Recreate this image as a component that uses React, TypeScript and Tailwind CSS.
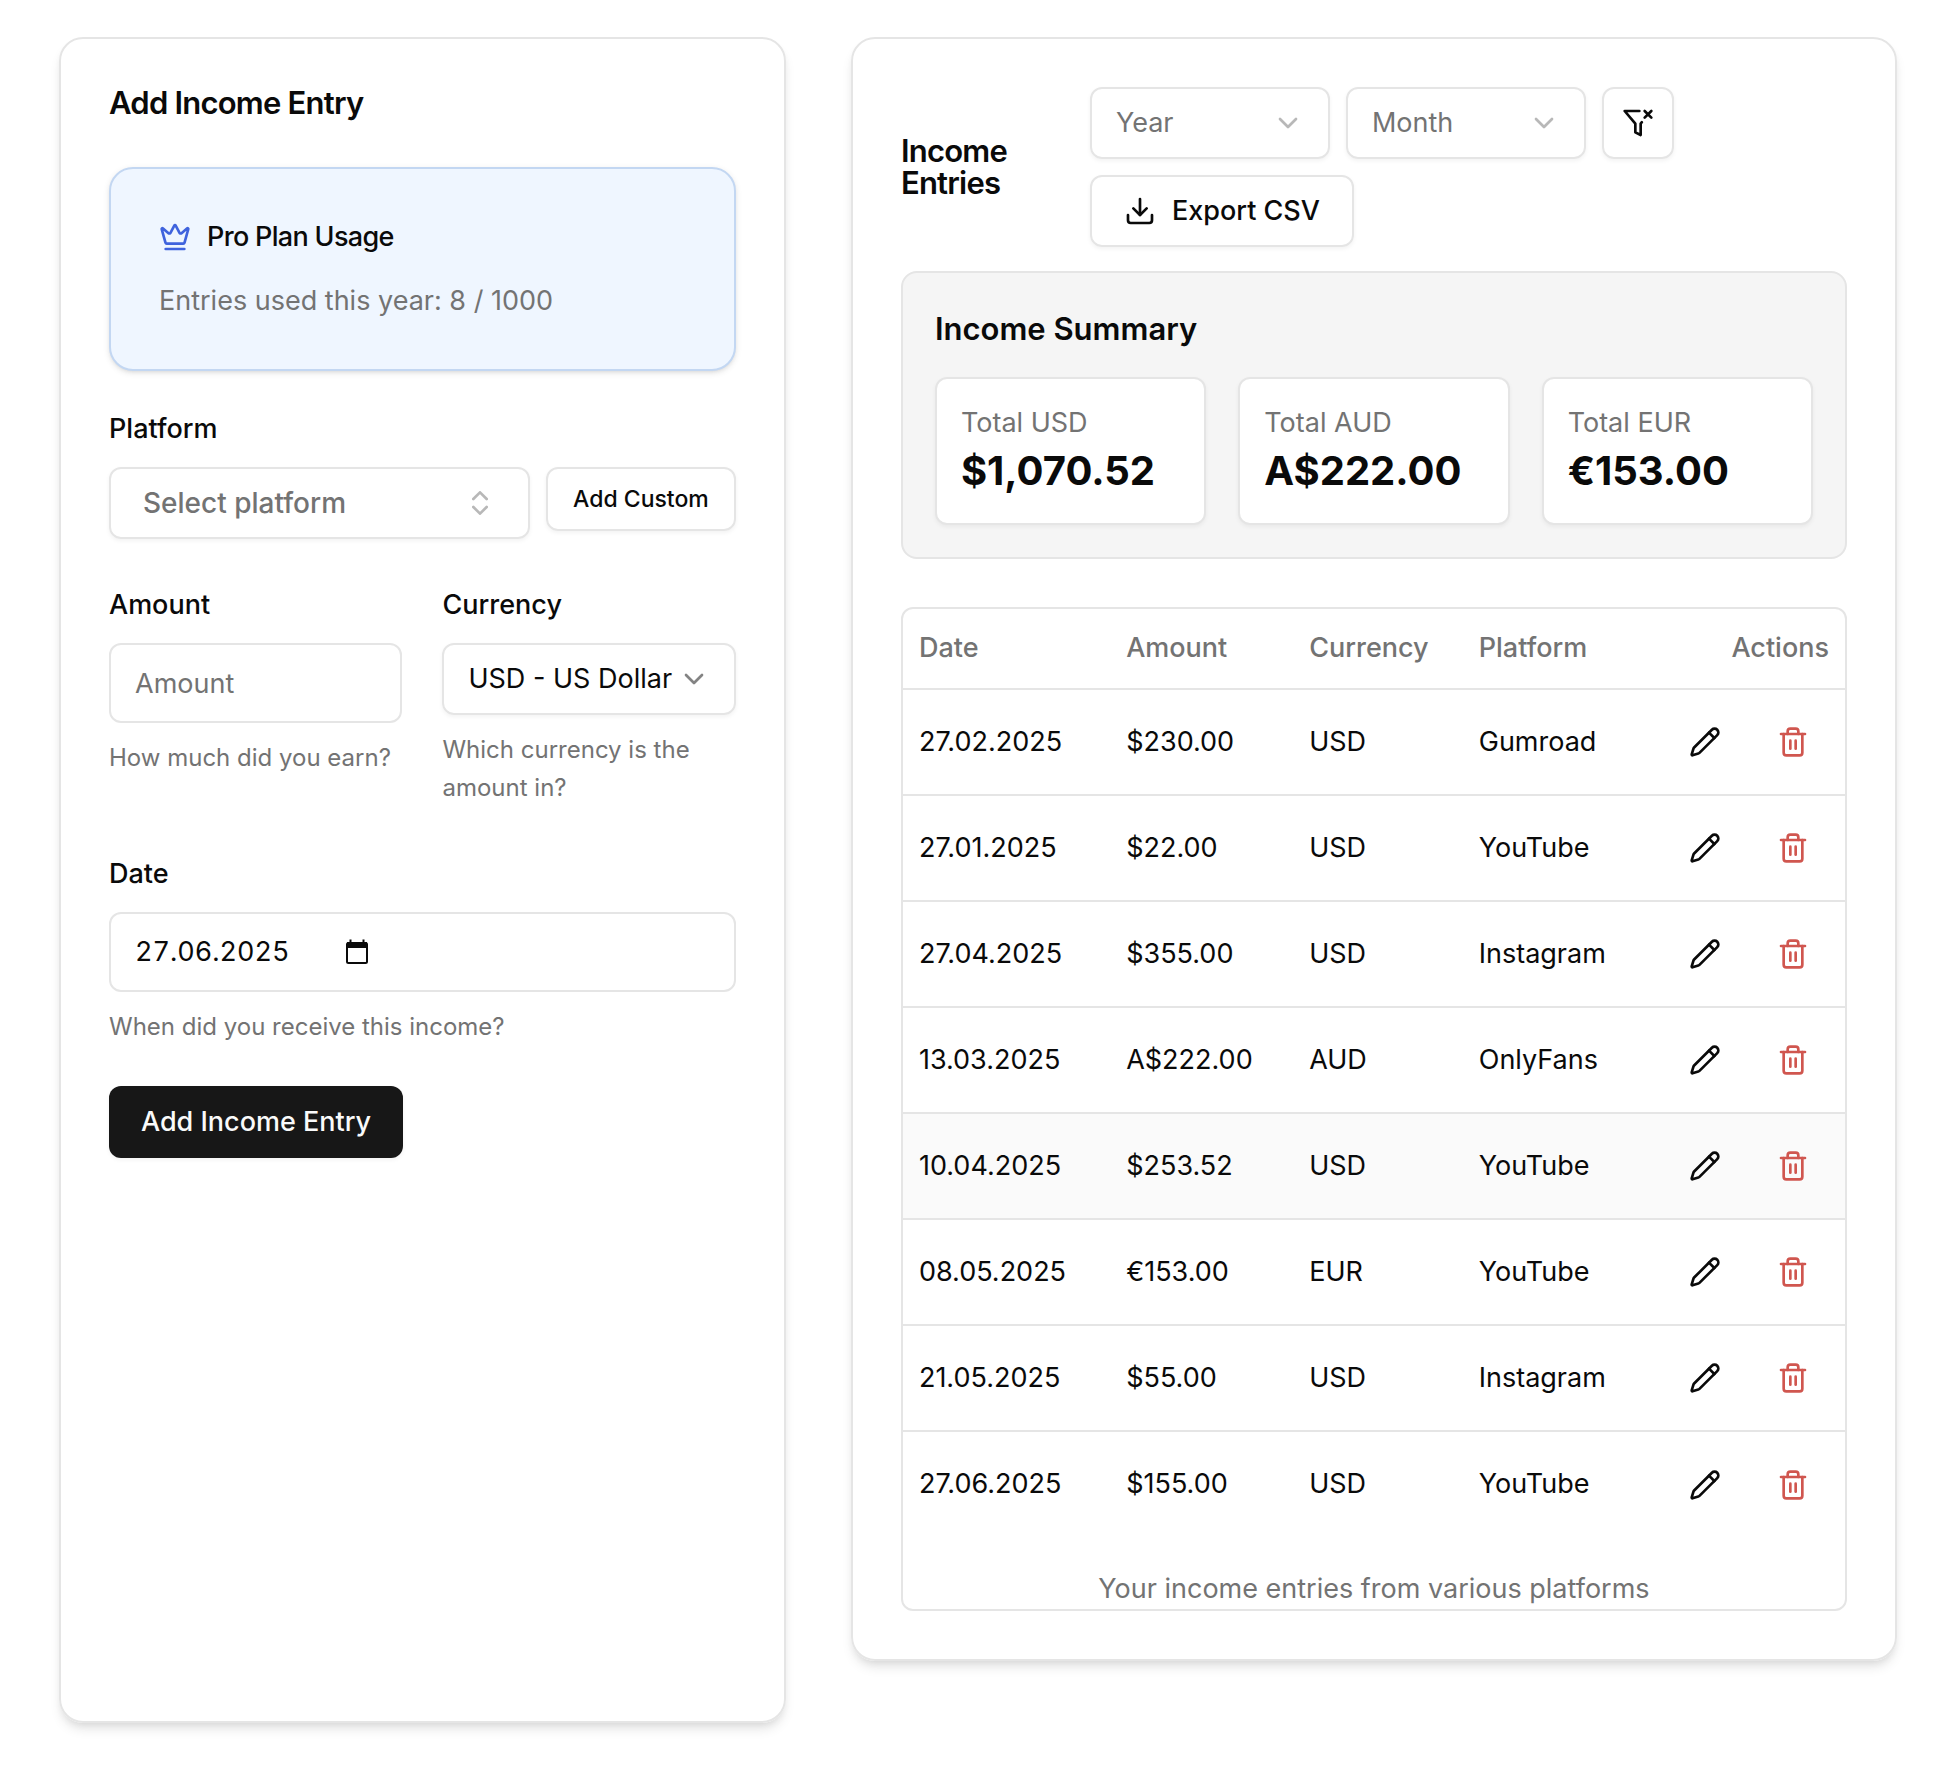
import type { ReactNode } from "react";
import { ChevronDown, ChevronsUpDown, Crown, Download, Pencil, Trash2 } from "lucide-react";

const totals = [
  { currency: "USD", total: "$1,070.52" },
  { currency: "AUD", total: "A$222.00" },
  { currency: "EUR", total: "€153.00" },
];

const entries = [
  { date: "27.02.2025", amount: "$230.00", currency: "USD", platform: "Gumroad" },
  { date: "27.01.2025", amount: "$22.00", currency: "USD", platform: "YouTube" },
  { date: "27.04.2025", amount: "$355.00", currency: "USD", platform: "Instagram" },
  { date: "13.03.2025", amount: "A$222.00", currency: "AUD", platform: "OnlyFans" },
  { date: "10.04.2025", amount: "$253.52", currency: "USD", platform: "YouTube", active: true },
  { date: "08.05.2025", amount: "€153.00", currency: "EUR", platform: "YouTube" },
  { date: "21.05.2025", amount: "$55.00", currency: "USD", platform: "Instagram" },
  { date: "27.06.2025", amount: "$155.00", currency: "USD", platform: "YouTube" },
];

const cardClass =
  "rounded-3xl border-2 border-[#e5e5e5] p-12 shadow-[0_8px_12px_-2px_rgba(0,0,0,0.1),0_4px_8px_-4px_rgba(0,0,0,0.1)]";
const controlClass = "rounded-xl border-2 border-[#e5e5e5] shadow-[0_2px_4px_rgba(0,0,0,0.05)]";

function FilterXIcon() {
  return (
    <svg
      className="size-8"
      viewBox="0 0 24 24"
      fill="none"
      stroke="currentColor"
      strokeWidth="2"
      strokeLinecap="round"
      strokeLinejoin="round"
      aria-hidden="true"
    >
      <path d="M13.013 3H2l8 9.46V19l4 2v-8.54l.9-1.055" />
      <path d="m22 3-5 5" />
      <path d="m17 3 5 5" />
    </svg>
  );
}

function CalendarIcon() {
  return (
    <svg className="h-7 w-6" viewBox="0 0 24 28" fill="none" aria-hidden="true">
      <rect x="2" y="5" width="20" height="20" rx="1.5" stroke="currentColor" strokeWidth="2" />
      <path d="M2 4h20v6H2zM4.500 1.500h2v4h-2zM17.500 1.500h2v4h-2z" fill="currentColor" />
    </svg>
  );
}

type SelectFieldProps = {
  id?: string;
  label?: string;
  className: string;
  children: ReactNode;
};

function SelectField({ id, label, className, children }: SelectFieldProps) {
  return (
    <div className={`grid h-[72px] items-center ${controlClass} ${className}`}>
      <select
        id={id}
        aria-label={label}
        className="col-start-1 row-start-1 h-full w-full appearance-none bg-transparent pl-6 outline-none"
      >
        {children}
      </select>
      <ChevronDown className="pointer-events-none col-start-1 row-start-1 mr-6 size-8 justify-self-end opacity-50" />
    </div>
  );
}

function IncomeForm() {
  return (
    <section className={cardClass}>
      <h2 className="text-[31px] leading-[32px] font-semibold tracking-tight">Add Income Entry</h2>

      <div className="mt-12 h-[204px] rounded-3xl border-2 border-[#c3d7f2] bg-[#eff6ff] px-12 pt-12 shadow-[0_2px_6px_rgba(0,0,0,0.1),0_2px_4px_-2px_rgba(0,0,0,0.1)]">
        <div className="flex items-center gap-4">
          <Crown className="size-8 text-[#3f63dd]" />
          <h3 className="text-[27px] leading-[40px] font-medium tracking-tight">Pro Plan Usage</h3>
        </div>
        <p className="mt-6 text-[27px] leading-[40px] text-[#737373]">Entries used this year: 8 / 1000</p>
      </div>

      <form className="mt-11 flex flex-col">
        <label htmlFor="platform" className="font-medium leading-[28px]">Platform</label>
        <div className="mt-6 flex items-start gap-4">
          <div className={`grid h-[72px] flex-1 items-center text-[28px] font-medium text-[#737373] ${controlClass}`}>
            <select
              id="platform"
              className="col-start-1 row-start-1 h-full w-full appearance-none bg-transparent pl-8 outline-none"
            >
              <option>Select platform</option>
            </select>
            <ChevronsUpDown className="pointer-events-none col-start-1 row-start-1 mr-8 size-8 justify-self-end opacity-50" />
          </div>
          <button type="button" className={`h-16 w-[190px] text-[23px] font-medium ${controlClass}`}>
            Add Custom
          </button>
        </div>

        <div className="mt-13 grid grid-cols-2 gap-10">
          <div className="flex flex-col">
            <label htmlFor="amount" className="font-medium leading-[28px]">Amount</label>
            <input
              id="amount"
              type="text"
              placeholder="Amount"
              className="mt-6 h-20 w-full rounded-xl border-2 border-[#e5e5e5] px-6 outline-none placeholder:text-[#737373]"
            />
            <p className="mt-4 text-[24px] leading-[38px] text-[#737373]">How much did you earn?</p>
          </div>
          <div className="flex flex-col">
            <label htmlFor="currency" className="font-medium leading-[28px]">Currency</label>
            <SelectField id="currency" className="mt-6">
              <option>USD - US Dollar</option>
            </SelectField>
            <p className="mt-4 text-[24px] leading-[38px] text-[#737373]">Which currency is the amount in?</p>
          </div>
        </div>

        <label htmlFor="date" className="mt-[53px] font-medium leading-[28px]">Date</label>
        <div className="mt-6 flex h-20 items-center rounded-xl border-2 border-[#e5e5e5] pl-6">
          <input id="date" type="text" defaultValue="27.06.2025" className="w-[210px] tabular-nums outline-none" />
          <button type="button" aria-label="Open calendar">
            <CalendarIcon />
          </button>
        </div>
        <p className="mt-4 text-[24px] leading-[38px] text-[#737373]">When did you receive this income?</p>

        <button
          type="submit"
          className="mt-10 h-[72px] self-start rounded-xl bg-[#171717] px-8 font-medium text-[#fafafa] shadow-[0_2px_4px_rgba(0,0,0,0.05)]"
        >
          Add Income Entry
        </button>
      </form>
    </section>
  );
}

function IncomeEntries() {
  return (
    <section className={`self-start ${cardClass}`}>
      <div className="flex items-center">
        <h2 className="w-[189px] pr-16 text-[31px] leading-[32px] font-semibold tracking-tight">Income Entries</h2>
        <div className="flex flex-1 flex-wrap gap-4">
          <SelectField label="Year" className="w-60 text-[#737373]">
            <option>Year</option>
          </SelectField>
          <SelectField label="Month" className="w-60 text-[#737373]">
            <option>Month</option>
          </SelectField>
          <button
            type="button"
            aria-label="Clear filters"
            className={`mr-32 flex size-[72px] items-center justify-center ${controlClass}`}
          >
            <FilterXIcon />
          </button>
          <button type="button" className={`flex h-[72px] items-center gap-4 px-8 font-medium ${controlClass}`}>
            <Download className="size-8" />
            Export CSV
          </button>
        </div>
      </div>

      <div className="mt-6 rounded-2xl border-2 border-[#e5e5e5] bg-[#f5f5f5] p-8">
        <h3 className="text-[31px] leading-[48px] font-semibold">Income Summary</h3>
        <div className="mt-6 grid grid-cols-3 gap-8">
          {totals.map((item) => (
            <div key={item.currency} className={`bg-white p-6 ${controlClass}`}>
              <p className="leading-[40px] text-[#737373]">Total {item.currency}</p>
              <p className="text-[40px] leading-[56px] font-bold">{item.total}</p>
            </div>
          ))}
        </div>
      </div>

      <div className="mt-12 rounded-xl border-2 border-[#e5e5e5]">
        <table className="w-full caption-bottom">
          <caption className="mt-8 leading-[40px] text-[#737373]">Your income entries from various platforms</caption>
          <thead>
            <tr className="h-20 border-b-2 border-[#e5e5e5] text-left text-[#737373]">
              <th className="w-[22%] px-4 font-medium">Date</th>
              <th className="w-[183px] px-4 font-medium">Amount</th>
              <th className="w-[18%] px-4 font-medium">Currency</th>
              <th className="w-[18%] px-4 font-medium">Platform</th>
              <th className="px-4 text-right font-medium">Actions</th>
            </tr>
          </thead>
          <tbody>
            {entries.map((entry) => (
              <tr
                key={entry.date}
                className={`h-[106px] border-b-2 border-[#e5e5e5] last:border-b-0 ${entry.active ? "bg-[#fafafa]" : ""}`}
              >
                <td className="px-4">{entry.date}</td>
                <td className="px-4">{entry.amount}</td>
                <td className="px-4">{entry.currency}</td>
                <td className="px-4">{entry.platform}</td>
                <td className="px-4">
                  <div className="flex justify-end gap-4">
                    <button type="button" aria-label="Edit entry" className="flex size-[72px] items-center justify-center">
                      <Pencil className="size-8" />
                    </button>
                    <button
                      type="button"
                      aria-label="Delete entry"
                      className="flex size-[72px] items-center justify-center text-[#d0564f]"
                    >
                      <Trash2 className="size-8" />
                    </button>
                  </div>
                </td>
              </tr>
            ))}
          </tbody>
        </table>
      </div>
    </section>
  );
}

export default function App() {
  return (
    <main className="grid min-h-screen grid-cols-[41fr_59fr] gap-[65px] bg-white pt-[37px] pr-[63px] pb-[51px] pl-[59px] font-[Inter,sans-serif] text-[27px] text-[#0a0a0a]">
      <IncomeForm />
      <IncomeEntries />
    </main>
  );
}
